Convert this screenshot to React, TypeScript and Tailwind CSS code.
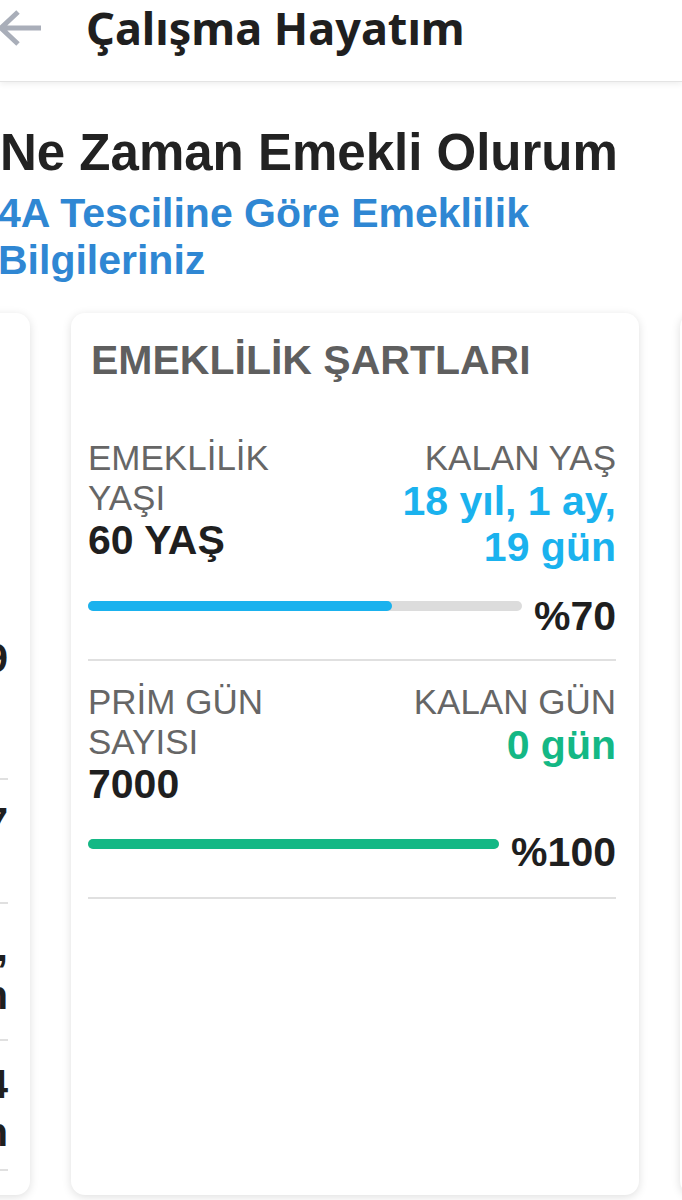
import React from 'react';

const font = { fontFamily: '"Liberation Sans", Arial, sans-serif' };
const headerFont = { fontFamily: '"Noto Sans", Roboto, sans-serif' };

interface BarProps {
  percent: number;
  color: string;
  barTop: string;
}

// progress bar with the percent label to its right
const ProgressRow: React.FC<BarProps> = ({ percent, color, barTop }) => {
  return (
    <div className="flex items-start gap-[12px]">
      <div className={`flex-1 h-[10px] rounded-full bg-[#dcdcdc] ${barTop}`}>
        <div className={`h-full rounded-full ${color}`} style={{ width: `${percent}%` }} />
      </div>
      <div className="text-[41px] leading-[44px] font-bold text-[#1f1f1f]">%{percent}</div>
    </div>
  );
};

const ConditionsCard: React.FC = () => {
  return (
    <div className="w-[568px] h-[882px] shrink-0 rounded-[14px] bg-white shadow-[0_2px_10px_rgba(0,0,0,0.13)] pl-[17px] pr-[23px] pt-[25px]">
      <h3 className="pl-[3px] text-[41px] leading-[44px] font-bold text-[#5f5f5f]">EMEKLİLİK ŞARTLARI</h3>

      {/* yaş şartı */}
      <div className="mt-[56px] flex justify-between">
        <div>
          <div className="text-[35px] leading-[40px] text-[#666]">EMEKLİLİK<br />YAŞI</div>
          <div className="text-[41px] leading-[44px] font-bold text-[#1f1f1f]">60 YAŞ</div>
        </div>
        <div className="text-right">
          <div className="text-[35px] leading-[40px] text-[#666]">KALAN YAŞ</div>
          <div className="text-[41px] leading-[46px] font-bold text-[#1ab2ee]">18 yıl, 1 ay,<br />19 gün</div>
        </div>
      </div>
      <div className="mt-[24px]">
        <ProgressRow percent={70} color="bg-[#1ab2ee]" barTop="mt-[7px]" />
      </div>
      <div className="mt-[21px] border-t-2 border-[#e0e0e0]" />

      {/* prim günü şartı */}
      <div className="mt-[21px] flex justify-between">
        <div>
          <div className="text-[35px] leading-[40px] text-[#666]">PRİM GÜN<br />SAYISI</div>
          <div className="text-[41px] leading-[44px] font-bold text-[#1f1f1f]">7000</div>
        </div>
        <div className="text-right">
          <div className="text-[35px] leading-[40px] text-[#666]">KALAN GÜN</div>
          <div className="text-[41px] leading-[46px] font-bold text-[#14b885]">0 gün</div>
        </div>
      </div>
      <div className="mt-[24px]">
        <ProgressRow percent={100} color="bg-[#14b885]" barTop="mt-[9px]" />
      </div>
      <div className="mt-[23px] border-t-2 border-[#e0e0e0]" />
    </div>
  );
};

// previous card in the carousel, mostly scrolled out of view
const InfoCard: React.FC = () => {
  return (
    <div className="w-[568px] h-[882px] shrink-0 rounded-[14px] bg-white shadow-[0_2px_10px_rgba(0,0,0,0.13)] pl-[17px] pr-[22px] pt-[25px]">
      <h3 className="pl-[3px] text-[41px] leading-[44px] font-bold text-[#5f5f5f]">MEVCUT DURUMUNUZ</h3>
      <div className="mt-[56px] text-[35px] leading-[40px] text-[#666]">TOPLAM PRİM<br />GÜN SAYINIZ</div>
      <div className="mt-[118px] flex items-start gap-[12px]">
        <div className="flex-1 mt-[8px] h-[10px] rounded-full bg-[#dcdcdc]">
          <div className="h-full w-[59%] rounded-full bg-[#1ab2ee]" />
        </div>
        <div className="text-[41px] leading-[44px] font-bold text-[#1f1f1f]">%59</div>
      </div>
      <div className="mt-[98px] border-t-2 border-[#e0e0e0]" />
      <div className="pt-[20px] pb-[22px] flex justify-between">
        <div className="text-[35px] leading-[40px] text-[#666]">TOPLAM<br />GÜN</div>
        <div className="text-[41px] leading-[44px] font-bold text-[#1f1f1f] text-right">4137</div>
      </div>
      <div className="border-t-2 border-[#e0e0e0]" />
      <div className="pt-[19px] pb-[20px] flex justify-between">
        <div className="text-[35px] leading-[40px] text-[#666]">SİGORTALILIK<br />SÜRESİ</div>
        <div className="text-[41px] leading-[48px] font-bold text-[#1f1f1f] text-right">11 yıl, 5 ay,<br />2 gün</div>
      </div>
      <div className="border-t-2 border-[#e0e0e0]" />
      <div className="pt-[19px] pb-[13px] flex justify-between">
        <div className="text-[35px] leading-[40px] text-[#666]">İLK GİRİŞ</div>
        <div className="text-[41px] leading-[48px] font-bold text-[#1f1f1f] text-right">03.2014<br />5 gün</div>
      </div>
      <div className="border-t-2 border-[#e0e0e0]" />
    </div>
  );
};

const NextCard: React.FC = () => {
  return (
    <div className="w-[568px] h-[882px] shrink-0 rounded-[14px] bg-white shadow-[0_2px_10px_rgba(0,0,0,0.13)]" />
  );
};

const App: React.FC = () => {
  return (
    <div className="w-[682px] h-[1200px] overflow-hidden bg-white" style={font}>
      <header className="h-[82px] flex items-center border-b border-[#e4e4e4] shadow-[0_2px_6px_rgba(0,0,0,0.07)] relative z-10">
        <svg width="46" height="40" viewBox="0 0 46 40" className="-ml-[3px] -mt-[26px] shrink-0">
          <path d="M44 20H5M21 4L4 20l17 16" fill="none" stroke="#a9aeb9" strokeWidth="5" />
        </svg>
        <h1 className="ml-[43px] -mt-[26px] text-[45px] leading-[50px] font-bold text-[#1f1f1f]" style={headerFont}>
          Çalışma Hayatım
        </h1>
      </header>

      <h2 className="mt-[42px] text-[51px] leading-[58px] font-bold text-[#222]">Ne Zaman Emekli Olurum</h2>
      <p className="mt-[8px] -ml-[2px] text-[41px] leading-[47px] font-bold text-[#2f87d3]">
        4A Tesciline Göre Emeklilik
        <br />
        Bilgileriniz
      </p>

      <div className="mt-[29px] -ml-[538px] flex gap-[41px]">
        <InfoCard />
        <ConditionsCard />
        <NextCard />
      </div>
    </div>
  );
};

export default App;
